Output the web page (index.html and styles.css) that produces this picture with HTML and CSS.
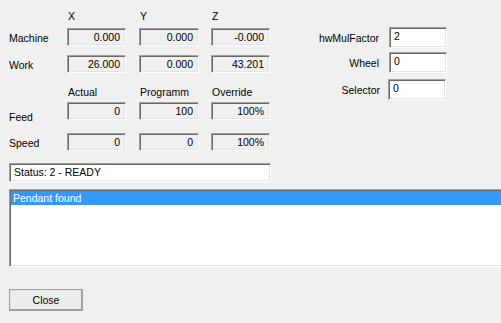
FILE: index.html
```html
<!DOCTYPE html>
<html>
<head>
<meta charset="utf-8">
<link rel="stylesheet" href="styles.css">
</head>
<body>
<div class="page">
  <div class="top">
    <div class="table">
      <div class="row head">
        <span></span><span>X</span><span>Y</span><span>Z</span>
      </div>
      <div class="row r-machine">
        <span class="lbl">Machine</span>
        <div class="ro">0.000</div>
        <div class="ro wide">0.000</div>
        <div class="ro">-0.000</div>
      </div>
      <div class="row r-work">
        <span class="lbl">Work</span>
        <div class="ro">26.000</div>
        <div class="ro wide">0.000</div>
        <div class="ro">43.201</div>
      </div>
      <div class="row head sub">
        <span></span><span>Actual</span><span>Programm</span><span>Override</span>
      </div>
      <div class="row r-feed">
        <span class="lbl low">Feed</span>
        <div class="ro">0</div>
        <div class="ro wide">100</div>
        <div class="ro">100%</div>
      </div>
      <div class="row r-speed">
        <span class="lbl">Speed</span>
        <div class="ro">0</div>
        <div class="ro wide">0</div>
        <div class="ro">100%</div>
      </div>
    </div>
    <div class="side">
      <div class="srow"><span class="slbl">hwMulFactor</span><div class="edit">2</div></div>
      <div class="srow"><span class="slbl">Wheel</span><div class="edit">0</div></div>
      <div class="srow sel"><span class="slbl">Selector</span><div class="edit">0</div></div>
    </div>
  </div>
  <div class="status">Status: 2 - READY</div>
  <div class="list">
    <div class="item selected">Pendant found</div>
  </div>
  <div class="btn">Close</div>
</div>
</body>
</html>
```
FILE: styles.css
```css
html, body {
  margin: 0;
  padding: 0;
  background: #f0f0f0;
  overflow: hidden;
}
body {
  width: 501px;
  height: 323px;
  font-family: "Liberation Sans", Arial, sans-serif;
  font-size: 10.5px;
  color: #000;
}
.page {
  padding: 0 0 0 9px;
  height: 323px;
  box-sizing: border-box;
}
.top {
  display: flex;
}
.table {
  display: flex;
  flex-direction: column;
}
.row {
  display: grid;
  grid-template-columns: 58px 72px 72px 59px;
  height: 18px;
}
.row.head {
  height: 13px;
  line-height: 13px;
  margin-top: 10px;
  margin-bottom: 5px;
}
.row.head span { padding-left: 1px; }
.row.head.sub {
  margin-top: 13px;
  margin-bottom: 3px;
}
.r-work { margin-top: 9px; }
.r-speed { margin-top: 13px; }
.lbl {
  line-height: 18px;
  padding-top: 1px;
}
.lbl.low { padding-top: 6px; line-height: 18px; }
.ro {
  width: 59px;
  height: 18px;
  box-sizing: border-box;
  background: #f0f0f0;
  border: 1px solid;
  border-color: #a0a0a0 #ffffff #ffffff #a0a0a0;
  box-shadow: inset 1px 1px 0 #696969, inset -1px -1px 0 #e3e3e3;
  text-align: right;
  padding-right: 5px;
  line-height: 16px;
}
.ro.wide { width: 60px; }

.side {
  margin-left: 30px;
  padding-top: 27px;
  display: flex;
  flex-direction: column;
  gap: 4px;
  width: 147px;
}
.srow {
  display: flex;
  justify-content: flex-end;
  align-items: center;
  gap: 10px;
  height: 21px;
}
.srow.sel { margin-top: 2px; padding-right: 1px; gap: 8px; }
.edit {
  width: 58px;
  height: 21px;
  box-sizing: border-box;
  background: #ffffff;
  border: 1px solid;
  border-color: #a0a0a0 #ffffff #ffffff #a0a0a0;
  box-shadow: inset 1px 1px 0 #696969, inset -1px -1px 0 #e3e3e3;
  padding-left: 4px;
  line-height: 17px;
}
.status {
  margin-top: 12px;
  width: 262px;
  height: 19px;
  box-sizing: border-box;
  background: #fff;
  border: 1px solid;
  border-color: #a0a0a0 #ffffff #ffffff #a0a0a0;
  box-shadow: inset 1px 1px 0 #696969, inset -1px -1px 0 #e3e3e3;
  padding-left: 4px;
  line-height: 17px;
}
.list {
  margin-top: 7px;
  width: 510px;
  height: 78px;
  box-sizing: border-box;
  background: #fff;
  border: 1px solid;
  border-color: #a0a0a0 #ffffff #ffffff #a0a0a0;
  box-shadow: inset 1px 1px 0 #696969, inset -1px -1px 0 #e3e3e3;
  padding: 1px 0 0 1px;
}
.item {
  height: 14px;
  line-height: 14px;
  padding-left: 2px;
}
.item.selected {
  background: #3399ff;
  color: #fff;
}
.btn {
  margin-top: 22px;
  width: 74px;
  height: 22px;
  box-sizing: border-box;
  background: #ececec;
  border: 1px solid;
  border-color: #ffffff #696969 #696969 #ffffff;
  box-shadow: inset -1px -1px 0 #a0a0a0, inset 1px 1px 0 #e3e3e3;
  outline: 1px solid #a0a0a0;
  outline-offset: -1px;
  text-align: center;
  line-height: 20px;
}
```
